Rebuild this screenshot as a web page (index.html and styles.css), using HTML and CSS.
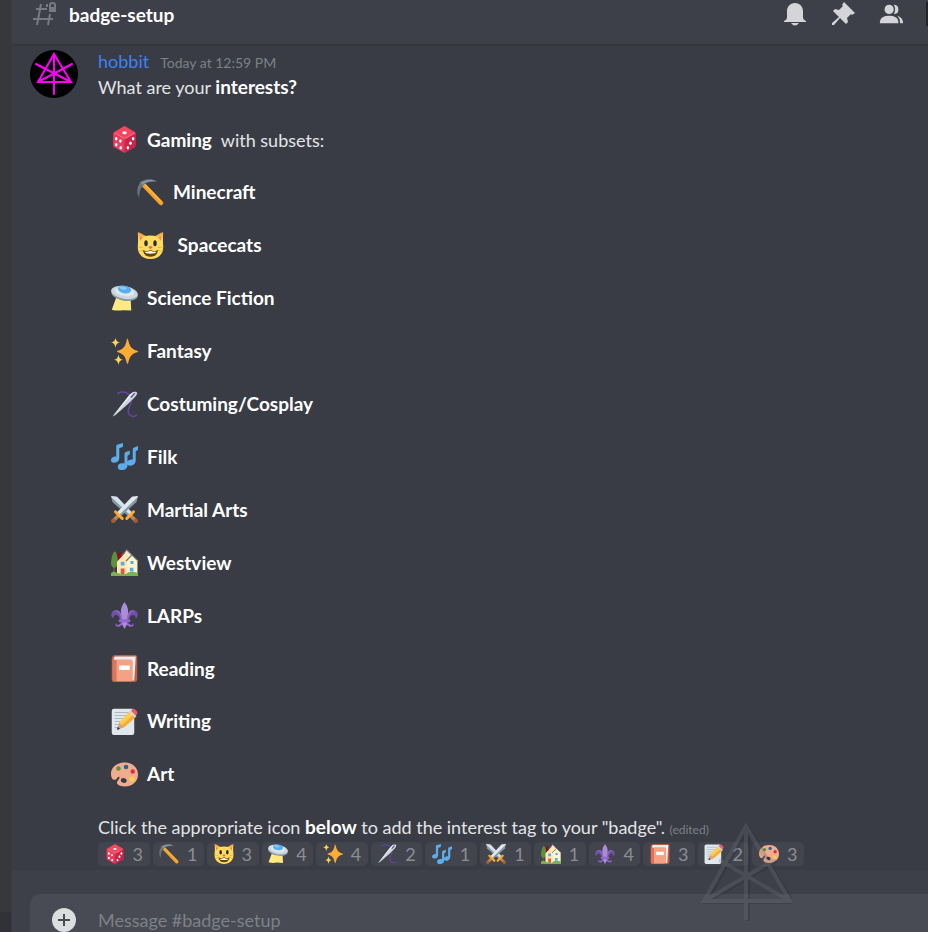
FILE: index.html
```html
<!DOCTYPE html>
<html lang="en">
<head>
  <meta charset="UTF-8">
  <meta name="viewport" content="width=device-width, initial-scale=1">
  <title>badge-setup</title>
  <link rel="stylesheet" href="styles.css">
</head>
<body>
  <!-- emoji sprite -->
  <svg class="sprite" aria-hidden="true">
    <symbol id="die" viewBox="0 0 36 36">
      <path fill="#dd2e52" d="M18 0L32 8Q33 9 33 10V26Q33 27 32 28L18 36L4 28Q3 27 3 26V10Q3 9 4 8Z"/>
      <path fill="#f4475f" d="M18 0L32 8.500L18 17L4 8.500Z"/>
      <path fill="#ea3c5c" d="M3 10L17 18V35L4 28Q3 27 3 26Z"/>
      <path fill="#c9254a" d="M33 10L19 18V35L32 28Q33 27 33 26Z"/>
      <path fill="none" stroke="#f7899b" stroke-width="1" d="M4 9L18 17L32 9"/>
      <g fill="#fff">
        <ellipse cx="18" cy="9" rx="3" ry="2"/>
        <ellipse cx="7" cy="17" rx="1.700" ry="2.200"/>
        <ellipse cx="13" cy="29" rx="1.700" ry="2.200"/>
        <ellipse cx="12.500" cy="20" rx="1.700" ry="2.200"/>
        <ellipse cx="7" cy="25" rx="1.700" ry="2.200"/>
        <ellipse cx="29.500" cy="17" rx="1.700" ry="2.200"/>
        <ellipse cx="26" cy="23" rx="1.700" ry="2.200"/>
        <ellipse cx="22.500" cy="29" rx="1.700" ry="2.200"/>
      </g>
    </symbol>
    <symbol id="pick" viewBox="0 0 36 36">
      <path stroke="#f4a12a" stroke-width="6" stroke-linecap="round" d="M7 6L32 32"/>
      <path stroke="#ffb940" stroke-width="1.500" d="M9 6L32 30"/>
      <path fill="#66757f" d="M4 5L8 2C15-1 22 0 27 4C19 3 13 4 9 8C4 12 3 18 3 25C-1 19 0 11 4 5Z"/>
      <path fill="#8899a6" d="M6 5C13 0 20 0 26 3C17 2 11 4 7 8Z"/>
    </symbol>
    <symbol id="cat" viewBox="0 0 36 36">
      <path fill="#f2a53b" d="M1 2Q1-1 4 1L13 6L7 16L2 14ZM35 2Q35-1 32 1L23 6L29 16L34 14Z"/>
      <path fill="#ffdc5d" d="M2 3L9 6Q18 3 27 6L34 3L35 20C35 30 28 36 18 36S1 30 1 20Z"/>
      <path fill="#f18f55" d="M3 4L8 7L4 12ZM33 4L28 7L32 12Z"/>
      <ellipse cx="12" cy="15" rx="2.300" ry="4" fill="#292f33"/><ellipse cx="24" cy="15" rx="2.300" ry="4" fill="#292f33"/>
      <path fill="#e75a70" d="M15 20Q18 18 21 20L18 23Z"/>
      <path fill="#664500" d="M8 24Q13 27 18 24Q23 27 28 24Q27 33 18 33T8 24Z"/>
      <path fill="#fff" d="M10 26Q14 27 18 25Q22 27 26 26Q25 29 18 29T10 26Z"/>
      <path stroke="#f2a53b" stroke-width="1" d="M2 20L8 21M2 26L8 24M34 20L28 21M34 26L28 24"/>
    </symbol>
    <symbol id="ufo" viewBox="0 0 36 36">
      <path fill="#ffe981" d="M8 14L1 33Q8 35 16 33.500L27 34L26 14Z"/>
      <ellipse cx="18" cy="12" rx="18" ry="9" transform="rotate(10 18 12)" fill="#8899a6"/>
      <ellipse cx="18" cy="10" rx="18" ry="8.500" transform="rotate(10 18 10)" fill="#ccd6dd"/>
      <ellipse cx="18" cy="9" rx="13" ry="5.500" transform="rotate(10 18 9)" fill="#e1e8ed"/>
      <ellipse cx="18" cy="6" rx="9" ry="5" transform="rotate(10 18 6)" fill="#55acee"/>
      <ellipse cx="16" cy="4" rx="5" ry="2" transform="rotate(10 16 4)" fill="#8ccaf7"/>
    </symbol>
    <symbol id="sparkles" viewBox="0 0 36 36">
      <path fill="#ffac33" d="M21 1Q22 0 23 3C25 12 28 15 35 17Q37 18 35 19C28 21 25 24 23 33Q22 36 21 33C19 24 16 21 9 19Q7 18 9 17C16 15 19 12 21 3Z"/>
      <path fill="#ffd44f" d="M6 0C7 4 8 5 12 6C8 7 7 8 6 13C5 8 4 7 0 6C4 5 5 4 6 0ZM10 22C11 27 12 28 16 29C12 30 11 31 10 36C9 31 8 30 4 29C8 28 9 27 10 22Z"/>
    </symbol>
    <symbol id="needle" viewBox="0 0 36 36">
      <path fill="none" stroke="#66459f" stroke-width="2" stroke-linecap="round" d="M9 3C18-1 26 3 27 12C28 18 22 22 23 28C24 33 30 36 34 32"/>
      <path fill="#ccd6dd" d="M2 34L23 7Q29 0 33 1T32 8L23 17L6 32Z"/>
      <path fill="#eef3f6" d="M2 34L25 5Q29 1 32 1L20 14Z"/>
      <path stroke="#66459f" stroke-width="2" stroke-linecap="round" d="M27 8L31 3.500"/>
    </symbol>
    <symbol id="notes" viewBox="0 0 36 36">
      <g fill="#5dadec">
        <path d="M7 4Q7 2 9 2L16 0V5L11 7V20Q11 25 6 26Q0 27 0 23T5 18H7Z"/>
        <path d="M18 14Q18 12 20 12L25 10V15L22 17V29Q22 35 16 36Q9 37 9 32T15 27H18Z"/>
        <path d="M29 8Q29 6 31 6L36 4V9L33 11V23Q33 28 28 30Q21 31 21 27T27 22H29Z"/>
      </g>
    </symbol>
    <symbol id="swords" viewBox="0 0 36 36">
      <path fill="#8899a6" d="M0 0L8 1L28 22L23 27L2 8Z"/>
      <path fill="#d6e2e9" d="M0 0L8 1L28 22L25 25L1 2Z"/>
      <path stroke="#be8451" stroke-width="5" d="M25 25L33 33"/>
      <path stroke="#ffac33" stroke-width="4" stroke-linecap="round" d="M21 30L30 21"/>
      <circle cx="33" cy="33" r="3" fill="#a65c31"/>
      <g transform="translate(36) scale(-1 1)">
        <path fill="#8899a6" d="M0 0L8 1L28 22L23 27L2 8Z"/>
        <path fill="#e1e8ed" d="M0 0L8 1L28 22L25 25L1 2Z"/>
        <path stroke="#be8451" stroke-width="5" d="M25 25L33 33"/>
        <path stroke="#ffac33" stroke-width="4" stroke-linecap="round" d="M21 30L30 21"/>
        <circle cx="33" cy="33" r="3" fill="#a65c31"/>
      </g>
    </symbol>
    <symbol id="house" viewBox="0 0 36 36">
      <path stroke="#77553a" stroke-width="2" d="M4 20V34"/>
      <path fill="#5c913b" d="M5 3Q8 5 9 13Q10 24 5 25Q0 25 0 18Q1 6 5 3Z"/>
      <path fill="#a0041e" d="M9 5H14V14H9Z"/>
      <path fill="#ffe8b6" d="M8 17L18 6L21 1L35 15V34H8Z"/>
      <path fill="#fff4ce" d="M22 17L28 8L35 15V34H22Z"/>
      <path fill="none" stroke="#66757f" stroke-width="1.500" d="M14 9L21 1L28 8L20 16M28 8L35 15"/>
      <path fill="#55acee" d="M13 17H18V22H13ZM26 16H30V20H26ZM25 25H30V30H25Z"/>
      <path fill="#da5b3f" d="M13 26H18V34H13Z"/>
      <path fill="#77b255" d="M0 32Q4 28 8 32L19 34L23 31Q29 29 36 32V36H0Z"/>
    </symbol>
    <symbol id="lily" viewBox="0 0 36 36">
      <path fill="#7450a8" d="M15 24C15 13 8 8 3 12C-1 15 0 20 3 22C3 17 7 16 10 19L14 27ZM21 24C21 13 28 8 33 12C37 15 36 20 33 22C33 17 29 16 26 19L22 27Z"/>
      <path fill="#9266cc" d="M14 20C14 13 8 9 4 12C11 12 12 18 14 26H22C24 18 25 12 32 12C28 9 22 13 22 20ZM14 27Q9 34 6 28Q5 34 11 33L17 29L25 33Q31 34 30 28Q27 34 22 27Z"/>
      <path fill="#aa8dd8" d="M18 0Q10 10 15 22V30L18 36L21 30V22Q26 10 18 0Z"/>
      <rect x="10" y="23" width="16" height="4" rx="2" fill="#9266cc"/>
    </symbol>
    <symbol id="book" viewBox="0 0 36 36">
      <path fill="#c35c45" d="M5 0H32Q35 0 35 3V32Q35 36 31 36H4Q1 36 1 33V5Q1 1 5 0Z"/>
      <path fill="#e8eef1" d="M5 2H33L31 34H28V7H4Q3 4 5 2Z"/>
      <path fill="#f4a184" d="M8 6H26Q29 6 29 9V32Q29 35 26 35H7V6Z"/>
      <path fill="#dc765b" d="M2 5L7 7V35H4Q2 35 2 32Z"/>
      <path fill="#fff" d="M11 14H25V20H11Z"/>
    </symbol>
    <symbol id="memo" viewBox="0 0 36 36">
      <rect x="1" y="1" width="30" height="35" rx="3" fill="#e1e8ed"/>
      <path stroke="#99aab5" stroke-width="1" d="M5 6H24M5 10H24M5 14H20M5 18H17M5 22H14M5 26H11"/>
      <path fill="#ea596e" d="M28 2Q30 0 32 2L35 5Q36 7 34 9L32 11L26 5Z"/>
      <path fill="#ccd6dd" d="M24 5L26 3L34 11L32 13Z"/>
      <path fill="#ffcc4d" d="M24 5L32 13L17 26L11 19Z"/>
      <path fill="#f4ad3a" d="M29 10L32 13L17 26L14 23Z"/>
      <path fill="#d99e82" d="M11 19L17 26L8 29Z"/>
      <path fill="#292f33" d="M9 25L12 28L8 29Z"/>
    </symbol>
    <symbol id="palette" viewBox="0 0 36 36">
      <path fill="#efad8d" d="M18 2C7 2 0 9 0 17C0 22 2 25 4 25C8 26 8 20 11 21C13 23 7 27 8 30C10 33 14 34 18 34C28 34 36 28 36 18S28 2 18 2Z"/>
      <ellipse cx="17" cy="26" rx="4" ry="3" transform="rotate(15 17 26)" fill="#393c45"/>
      <circle cx="10" cy="10" r="3" fill="#5c913b"/><circle cx="20" cy="8" r="3" fill="#226699"/>
      <circle cx="29" cy="14" r="3" fill="#dd2e44"/><circle cx="28" cy="24" r="3.500" fill="#ffcc4d"/>
    </symbol>
  </svg>

  <aside class="rail"><div class="rail-foot"></div></aside>

  <div class="channel">
    <header class="topbar">
      <svg class="hash" viewBox="0 0 26 24" aria-hidden="true">
        <path fill="none" stroke="#777a82" stroke-width="2" d="M9 2L5 23M18 12L16 23M4 7H15M1 17H21M15 2V5"/>
        <path fill="#777a82" d="M17 5H24V10H17Z"/>
        <path fill="none" stroke="#777a82" stroke-width="2" d="M18 6V3Q18 1 20.500 1T23 3V6"/>
      </svg>
      <h1>badge-setup</h1>
      <div class="tools">
        <button type="button" aria-label="Notifications">
          <svg viewBox="0 0 24 24"><path d="M12 1C7 1 4 5 4 9V15C4 17 3 18 1 19V20H23V19C21 18 20 17 20 15V9C20 5 17 1 12 1ZM8 21Q12 26 16 21Z"/></svg>
        </button>
        <button type="button" aria-label="Pinned messages">
          <svg viewBox="0 0 24 24"><path d="M13 0L24 11L21 13L20 12L16 16L17 20L15 22L9 16L3 23L1 23L1 21L8 15L2 9L4 7L8 8L12 4L11 3Z"/></svg>
        </button>
        <button type="button" aria-label="Member list">
          <svg viewBox="0 0 26 24"><circle cx="11" cy="7" r="5"/><path d="M1 22V20Q2 14 11 14T21 20V22ZM16 2Q21 2 21 7T16 12Q19 7 16 2ZM20 14Q26 16 26 22H23Q23 17 20 14Z"/></svg>
        </button>
      </div>
      <div class="search-edge"></div>
    </header>

    <main class="message">
      <svg class="avatar" viewBox="0 0 48 48" role="img" aria-label="hobbit">
        <circle cx="24" cy="24" r="24" fill="#000"/>
        <path fill="none" stroke="#f0f" stroke-width="2" stroke-linecap="round" d="M24 4L8 32H41ZM24 4V44M6 14L41 32M42 14L8 32"/>
      </svg>
      <div class="message-body">
        <div class="byline"><a href="#">hobbit</a><time>Today at 12:59 PM</time></div>
        <p>What are your <strong>interests?</strong></p>
        <ul class="interests">
          <li><svg class="emoji"><use href="#die"/></svg><span><strong>Gaming</strong> &nbsp;with subsets:</span></li>
          <li class="sub"><svg class="emoji"><use href="#pick"/></svg><strong>Minecraft</strong></li>
          <li class="sub"><svg class="emoji"><use href="#cat"/></svg><strong>&nbsp;Spacecats</strong></li>
          <li><svg class="emoji"><use href="#ufo"/></svg><strong>Science Fiction</strong></li>
          <li><svg class="emoji"><use href="#sparkles"/></svg><strong>Fantasy</strong></li>
          <li><svg class="emoji"><use href="#needle"/></svg><strong>Costuming/Cosplay</strong></li>
          <li><svg class="emoji"><use href="#notes"/></svg><strong>Filk</strong></li>
          <li><svg class="emoji"><use href="#swords"/></svg><strong>Martial Arts</strong></li>
          <li><svg class="emoji"><use href="#house"/></svg><strong>Westview</strong></li>
          <li><svg class="emoji"><use href="#lily"/></svg><strong>LARPs</strong></li>
          <li><svg class="emoji"><use href="#book"/></svg><strong>Reading</strong></li>
          <li><svg class="emoji"><use href="#memo"/></svg><strong>Writing</strong></li>
          <li><svg class="emoji"><use href="#palette"/></svg><strong>Art</strong></li>
        </ul>
        <p>Click the appropriate icon <strong>below</strong> to add the interest tag to your "badge". <small>(edited)</small></p>
        <div class="reactions">
          <button type="button"><svg class="emoji"><use href="#die"/></svg>3</button>
          <button type="button"><svg class="emoji"><use href="#pick"/></svg>1</button>
          <button type="button"><svg class="emoji"><use href="#cat"/></svg>3</button>
          <button type="button"><svg class="emoji"><use href="#ufo"/></svg>4</button>
          <button type="button"><svg class="emoji"><use href="#sparkles"/></svg>4</button>
          <button type="button"><svg class="emoji"><use href="#needle"/></svg>2</button>
          <button type="button"><svg class="emoji"><use href="#notes"/></svg>1</button>
          <button type="button"><svg class="emoji"><use href="#swords"/></svg>1</button>
          <button type="button"><svg class="emoji"><use href="#house"/></svg>1</button>
          <button type="button"><svg class="emoji"><use href="#lily"/></svg>4</button>
          <button type="button"><svg class="emoji"><use href="#book"/></svg>3</button>
          <button type="button"><svg class="emoji"><use href="#memo"/></svg>2</button>
          <button type="button"><svg class="emoji"><use href="#palette"/></svg>3</button>
        </div>
      </div>
    </main>

    <footer>
      <form class="composer">
        <button type="button" aria-label="Add attachment">
          <svg viewBox="0 0 24 24"><circle cx="12" cy="12" r="12" fill="#dcddde"/><path stroke="#484b54" stroke-width="2" d="M12 6V18M6 12H18"/></svg>
        </button>
        <input type="text" aria-label="Message #badge-setup" placeholder="Message #badge-setup">
      </form>
    </footer>
  </div>

  <!-- embossed emblem over the bottom right corner -->
  <svg class="watermark" viewBox="0 0 92 100" aria-hidden="true">
    <path stroke="#24262c" transform="translate(2 1)" d="M46 3L4 78H90ZM46 3V97M4 78L74 37M90 78L19 37"/>
    <path stroke="#73767e" d="M46 3L4 78H90ZM46 3V97M4 78L74 37M90 78L19 37"/>
  </svg>
</body>
</html>
```
FILE: styles.css
```css
* {
  box-sizing: border-box;
}
body {
  margin: 0;
  min-height: 100vh;
  display: flex;
  position: relative;
  background: #393c45;
  color: #e3e4e6;
  font-family: Lato, "Open Sans", sans-serif;
  font-size: 18px;
  line-height: 26px;
}
button {
  border: 0;
  padding: 0;
  background: none;
  font: inherit;
  cursor: pointer;
}
p, ul, h1 {
  margin: 0;
  padding: 0;
}
strong {
  color: #fff;
  font-size: 19px;
  line-height: 24px;
}
.sprite {
  position: absolute;
  width: 0;
  height: 0;
}
.rail {
  width: 12px;
  flex: none;
  display: flex;
  align-items: flex-end;
  background: #36383c;
  border-right: 1px solid #373b40;
}
.rail-foot {
  width: 100%;
  height: 20px;
  background: #303237;
}
.channel {
  flex: 1;
  min-width: 0;
  display: flex;
  flex-direction: column;
}

/* top bar */
.topbar {
  display: flex;
  align-items: flex-start;
  height: 46px;
  padding: 2px 0 0 20px;
  background: #3e4049;
  border-bottom: 2px solid #35373d;
}
.hash {
  width: 26px;
  height: 24px;
  margin-right: 11px;
}
h1 {
  color: #fff;
  font-size: 19px;
}
.tools {
  display: flex;
  gap: 24px;
  margin-left: auto;
}
.tools button, .tools svg {
  display: block;
  width: 24px;
  height: 24px;
  fill: #d4d5d8;
}
.search-edge {
  width: 2px;
  height: 24px;
  margin-left: 23px;
  background: #222429;
}

/* message */
.message {
  flex: 1;
  display: flex;
  gap: 20px;
  padding: 2px 16px 4px 18px;
}
.avatar {
  width: 48px;
  height: 48px;
  margin-top: 2px;
  flex: none;
}
.message-body {
  flex: 1;
  min-width: 0;
  display: flex;
  flex-direction: column;
}
.byline {
  display: flex;
  align-items: baseline;
  gap: 11px;
}
.byline a {
  color: #3b82f6;
  text-decoration: none;
}
.byline time {
  color: #7d8087;
  font-size: 14px;
  line-height: 20px;
}
.interests {
  flex: 1;
  display: flex;
  flex-direction: column;
  justify-content: space-between;
  gap: 20px;
  padding: 26px 13px;
  list-style: none;
}
.interests li {
  display: flex;
  align-items: center;
  gap: 9px;
}
.interests .sub {
  padding-left: 26px;
}
.emoji {
  width: 27px;
  height: 27px;
  flex: none;
}
small {
  color: #7d8087;
  font-size: 12px;
  line-height: 16px;
}
.reactions {
  display: grid;
  grid-template-columns: repeat(13, 1fr);
  gap: 3px;
  max-width: 706px;
  margin-top: 2px;
}
.reactions button {
  display: flex;
  align-items: center;
  justify-content: center;
  gap: 8px;
  height: 24px;
  border-radius: 5px;
  background: #42454e;
  color: #8b8e95;
}
.reactions .emoji {
  width: 20px;
  height: 20px;
}

/* composer */
footer {
  padding: 24px 0 0 18px;
  background: #3d3f49;
}
.composer {
  display: flex;
  gap: 22px;
  padding: 14px 0 0 22px;
  border-radius: 10px 0 0 0;
  background: #484b54;
}
.composer button, .composer svg {
  display: block;
  width: 24px;
  height: 24px;
}
.composer input {
  flex: 1;
  min-width: 0;
  height: 24px;
  padding: 0;
  border: 0;
  outline: 0;
  background: none;
  color: #dcddde;
  font: inherit;
}
.composer input::placeholder {
  color: #7e8188;
}
.watermark {
  position: absolute;
  right: 136px;
  bottom: 9px;
  width: 92px;
  height: 100px;
  fill: none;
  stroke-width: 4px;
  opacity: 0.25;
  pointer-events: none;
}
```
